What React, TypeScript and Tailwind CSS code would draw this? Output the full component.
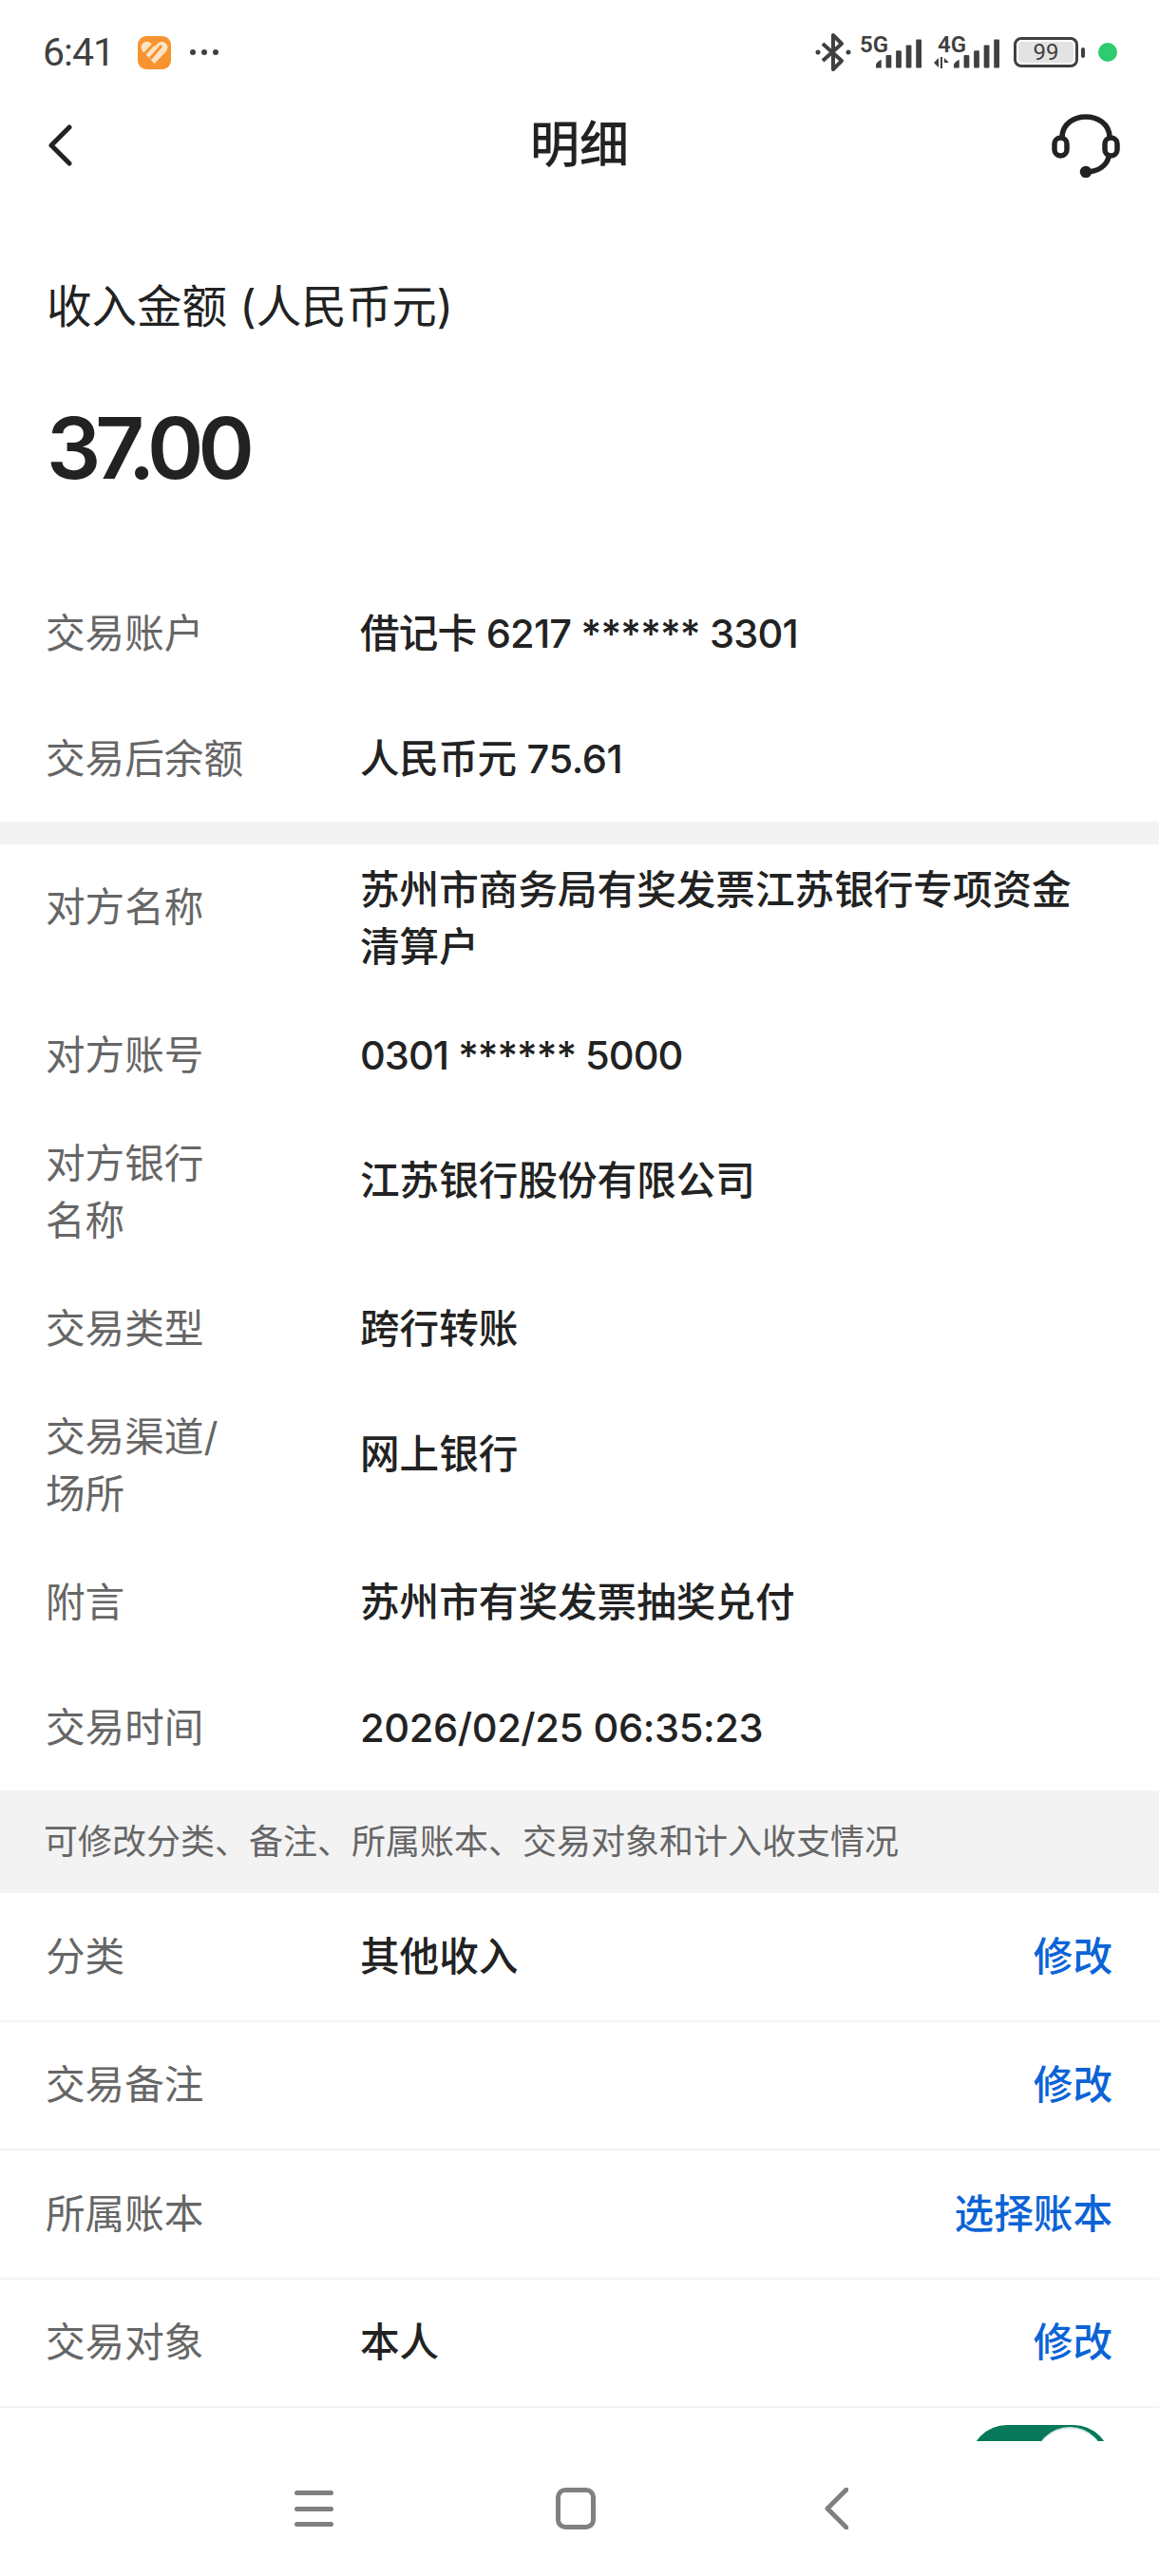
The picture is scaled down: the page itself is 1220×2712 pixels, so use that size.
const FONT = "[font-family:Inter,'Noto_Sans_CJK_SC',sans-serif]";

const TOP_ROWS = [
  { label: "交易账户", value: "借记卡 6217 ****** 3301", valueClass: "tracking-[-0.8px]" },
  { label: "交易后余额", value: "人民币元 75.61", valueClass: "tracking-[-0.4px]" },
];

const PARTY_ROWS = [
  { label: "对方名称", value: "苏州市商务局有奖发票江苏银行专项资金清算户", valueClass: "" },
  { label: "对方账号", value: "0301 ****** 5000", valueClass: "tracking-[-1px]" },
  { label: "对方银行\n名称", value: "江苏银行股份有限公司", valueClass: "" },
  { label: "交易类型", value: "跨行转账", valueClass: "" },
  { label: "交易渠道/\n场所", value: "网上银行", valueClass: "" },
  { label: "附言", value: "苏州市有奖发票抽奖兑付", valueClass: "" },
  { label: "交易时间", value: "2026/02/25 06:35:23", valueClass: "tracking-[-0.4px]" },
];

const EDIT_ROWS = [
  { label: "分类", value: "其他收入", action: "修改" },
  { label: "交易备注", value: "", action: "修改" },
  { label: "所属账本", value: "", action: "选择账本" },
  { label: "交易对象", value: "本人", action: "修改" },
];

function SignalBars({ className }: { className?: string }) {
  return (
    <svg viewBox="0 0 50 31" className={className} fill="#404040">
      <path d="M0 31v-3q0-3 6-6v9z" />
      <rect x="11" y="17" width="6" height="14" rx="1" />
      <rect x="22" y="12" width="6" height="19" rx="1" />
      <rect x="33" y="6" width="6" height="25" rx="1" />
      <rect x="44" y="0" width="6" height="31" rx="1" />
    </svg>
  );
}

function StatusBar() {
  return (
    <div className="flex h-[110px] items-center justify-between pl-[45px] pr-[44px]">
      <div className="flex items-center">
        <span className="text-[41px] leading-none tracking-[-1px] text-[#404040] [font-family:Roboto,sans-serif]">6:41</span>
        <svg viewBox="0 0 35 35" className="ml-[25px] h-[35px] w-[35px]">
          <rect width="35" height="35" rx="9" fill="#f7942f" />
          <path d="M17.5 29 5 16q-3-5 0-8 4-4 8-1l4.500 4 4.500-4q4-3 8 1 3 3 0 8z" fill="#fde3c4" />
          <path d="M7 19 19 6M13 24 25 10" stroke="#f7942f" strokeWidth="3" />
        </svg>
        <span className="ml-[20px] flex gap-[6px]">
          <span className="h-[6px] w-[6px] rounded-full bg-[#404040]" />
          <span className="h-[6px] w-[6px] rounded-full bg-[#404040]" />
          <span className="h-[6px] w-[6px] rounded-full bg-[#404040]" />
        </span>
      </div>
      <div className="flex items-center">
        <svg viewBox="0 0 38 42" className="h-[42px] w-[38px]" fill="none" stroke="#404040" strokeWidth="4">
          <path d="M8 12 28 30 19 39V3l9 9L8 30" strokeLinejoin="round" />
          <circle cx="3" cy="21" r="2.500" fill="#404040" stroke="none" />
          <circle cx="35" cy="21" r="2.500" fill="#404040" stroke="none" />
        </svg>
        <div className="relative ml-[9px] h-[34px] w-[65px]">
          <span className="absolute left-0 top-[-2px] text-[24px] font-semibold leading-[22px] text-[#404040] [font-family:Roboto,sans-serif]">5G</span>
          <SignalBars className="absolute bottom-0 right-0 h-[31px] w-[48px]" />
        </div>
        <div className="relative ml-[13px] h-[34px] w-[69px]">
          <span className="absolute left-[4px] top-[-2px] text-[24px] font-semibold leading-[22px] text-[#404040] [font-family:Roboto,sans-serif]">4G</span>
          <svg viewBox="0 0 16 12" className="absolute bottom-0 left-0 h-[12px] w-[16px]" fill="#404040">
            <path d="M0 6 5 1v10zM7 0h2v12H7zM11 1l5 5-5 0z" />
          </svg>
          <SignalBars className="absolute bottom-0 right-0 h-[31px] w-[48px]" />
        </div>
        <div className="ml-[15px] flex h-[32px] w-[68px] items-center justify-center rounded-[8px] border-[3px] border-[#404040] p-[2px]">
          <span className="flex h-full w-full items-center justify-center rounded-[4px] bg-[#e3e3e3] text-[24px] leading-none text-[#404040] [font-family:Roboto,sans-serif]">99</span>
        </div>
        <span className="ml-[3px] h-[11px] w-[4px] rounded-sm bg-[#404040]" />
        <span className="ml-[14px] h-[20px] w-[20px] rounded-full bg-[#2ecc6f]" />
      </div>
    </div>
  );
}

function NavBar() {
  return (
    <div className="grid h-[86px] grid-cols-[1fr_auto_1fr] items-center pl-[50px] pr-[41px]">
      <svg viewBox="0 0 26 44" className="h-[44px] w-[26px]" fill="none" stroke="#222" strokeWidth="5" strokeLinecap="round" strokeLinejoin="round">
        <path d="M23 3 4 22l19 19" />
      </svg>
      <h1 className="mr-[9px] text-[52px] font-medium leading-none text-[#222]">明细</h1>
      <svg viewBox="0 0 72 68" className="h-[68px] w-[72px] justify-self-end" fill="none" stroke="#222" strokeWidth="5.500">
        <path d="M11 25C12 -3 60 -3 61 25" />
        <rect x="3" y="26" width="13" height="19" rx="6.500" />
        <rect x="56" y="26" width="13" height="19" rx="6.500" />
        <path d="M60 46c-2 10-12 16-24 16" />
        <circle cx="36" cy="62" r="3.500" fill="#222" />
      </svg>
    </div>
  );
}

function InfoRow({ label, value, valueClass }: { label: string; value: string; valueClass: string }) {
  return (
    <div className="flex items-start py-[18px] pl-[48px] pr-[80px] text-[41.600px] leading-[60px]">
      <div className="flex min-h-[96px] w-[331px] shrink-0 items-center whitespace-pre-line text-[#666]">{label}</div>
      <div className={`flex min-h-[96px] flex-1 items-center font-medium text-[#222] ${valueClass}`}>{value}</div>
    </div>
  );
}

function EditRow({ label, value, action }: { label: string; value: string; action: string }) {
  return (
    <div className="flex h-[135.500px] items-center border-b-2 border-[#f3f3f3] pl-[48px] pr-[49px] text-[41.600px]">
      <div className="w-[331px] shrink-0 text-[#666]">{label}</div>
      <div className="flex-1 font-medium text-[#222]">{value}</div>
      <div className="font-medium text-[#0b63d6]">{action}</div>
    </div>
  );
}

export default function App() {
  return (
    <div className={`flex h-[2712px] w-[1220px] flex-col overflow-hidden bg-white ${FONT}`}>
      <div className="h-[2570px] shrink-0 overflow-hidden">
        <StatusBar />
        <NavBar />
        <div className="pl-[49px] pt-[99px] text-[47.500px] leading-[56px] text-[#222]">收入金额 (人民币元)</div>
        <div className="pl-[49px] pt-[66px] text-[90px] font-semibold leading-[110px] tracking-[-6px] text-[#222]">37.00</div>
        <div className="mt-[74px]">
          {TOP_ROWS.map((row) => (
            <InfoRow key={row.label} {...row} />
          ))}
        </div>
        <div className="h-[24px] bg-[#f3f3f3]" />
        {PARTY_ROWS.map((row) => (
          <InfoRow key={row.label} {...row} />
        ))}
        <div className="flex h-[108px] items-center bg-[#f3f3f3] pl-[46px] text-[36px] text-[#666]">
          可修改分类、备注、所属账本、交易对象和计入收支情况
        </div>
        {EDIT_ROWS.map((row) => (
          <EditRow key={row.label} {...row} />
        ))}
        <div className="flex justify-end pr-[51px] pt-[18px]">
          <div className="flex h-[78px] w-[148px] justify-end rounded-full bg-[#07795a] pr-[6px] pt-[2px]">
            <div className="h-[74px] w-[74px] rounded-full border-t-2 border-[#d5e8e1] bg-white" />
          </div>
        </div>
      </div>
      <div className="flex flex-1 items-start justify-center pr-[17px] pt-[49px]">
        <div className="flex h-[44px] w-[41px] flex-col justify-between py-[3px]">
          <span className="h-[5px] rounded-full bg-[#808080]" />
          <span className="h-[5px] rounded-full bg-[#808080]" />
          <span className="h-[5px] rounded-full bg-[#808080]" />
        </div>
        <div className="ml-[234px] h-[44px] w-[42px] rounded-[10px] border-[5px] border-[#808080]" />
        <svg viewBox="0 0 25 44" className="ml-[241px] h-[44px] w-[25px]" fill="none" stroke="#808080" strokeWidth="5" strokeLinecap="round" strokeLinejoin="round">
          <path d="M23 2 3 22l20 20" />
        </svg>
      </div>
    </div>
  );
}
